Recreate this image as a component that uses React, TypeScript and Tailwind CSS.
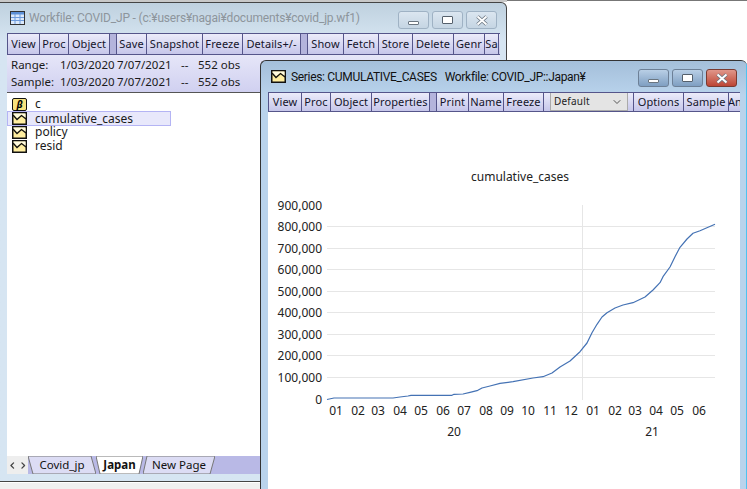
import React from 'react';
import { ChevronDown, ChevronLeft, ChevronRight } from 'lucide-react';

const FONT = "font-['Noto_Sans','Open_Sans',sans-serif]";

type Btn = { label: string; width: string; sep?: boolean };

const WORKFILE_BUTTONS: Btn[] = [
  { label: 'View', width: 'w-[32px]' },
  { label: 'Proc', width: 'w-[29px]' },
  { label: 'Object', width: 'w-[41px]' },
  { label: '', width: 'w-[7px]', sep: true },
  { label: 'Save', width: 'w-[30px]' },
  { label: 'Snapshot', width: 'w-[56px]' },
  { label: 'Freeze', width: 'w-[40px]' },
  { label: 'Details+/-', width: 'w-[58px]' },
  { label: '', width: 'w-[7px]', sep: true },
  { label: 'Show', width: 'w-[36px]' },
  { label: 'Fetch', width: 'w-[35px]' },
  { label: 'Store', width: 'w-[34px]' },
  { label: 'Delete', width: 'w-[41px]' },
  { label: 'Genr', width: 'w-[31px]' },
  { label: 'Sa', width: 'w-[14px]' },
];

const SERIES_LEFT: Btn[] = [
  { label: 'View', width: 'w-[33px]' },
  { label: 'Proc', width: 'w-[29px]' },
  { label: 'Object', width: 'w-[41px]' },
  { label: 'Properties', width: 'w-[58px]' },
  { label: '', width: 'w-[7px]', sep: true },
  { label: 'Print', width: 'w-[32px]' },
  { label: 'Name', width: 'w-[35px]' },
  { label: 'Freeze', width: 'w-[40px]' },
];

const SERIES_RIGHT: Btn[] = [
  { label: 'Options', width: 'w-[50px]' },
  { label: 'Sample', width: 'w-[45px]' },
  { label: 'An', width: 'w-[13px]' },
];

const OBJECTS = [
  { name: 'c', kind: 'coef' },
  { name: 'cumulative_cases', kind: 'series', selected: true },
  { name: 'policy', kind: 'series' },
  { name: 'resid', kind: 'series' },
];

const GRID = [226, 248, 269, 291, 312, 334, 355, 377];
const Y_LABELS = [
  ['900,000', 205],
  ['800,000', 226],
  ['700,000', 248],
  ['600,000', 269],
  ['500,000', 291],
  ['400,000', 312],
  ['300,000', 334],
  ['200,000', 355],
  ['100,000', 377],
  ['0', 399],
] as const;
const X_LABELS = [
  ['01', 336], ['02', 358], ['03', 378], ['04', 400], ['05', 421], ['06', 443],
  ['07', 464], ['08', 486], ['09', 507], ['10', 528], ['11', 550], ['12', 571],
  ['01', 593], ['02', 615], ['03', 635], ['04', 656], ['05', 677], ['06', 699],
] as const;
const LINE =
  '327,399.5 334,398 393,398 400,397 408,396 411,395.3 452,395.3 454,394.3 463,394 470,392.3 477,390.7 482,388 490,386 500,383.3 513,381.7 533,378 543,376.7 552,373 560,367 570,361 580,351.7 587,343 592,332.7 597,324.3 602,317 607,312.7 615,308 623,305 633,302.7 645,297 653,290 660,282.7 663,276.7 670,267 675,256.7 680,247.3 687,239 693,233.3 700,230.7 715,224.3';

const SeriesIcon = () => (
  <svg width="15" height="13" viewBox="0 0 15 13" className="shrink-0">
    <rect x="0.75" y="0.75" width="13.5" height="11.5" fill="#ffeea0" stroke="#111" strokeWidth="1.5" />
    <path d="M1.5 1.5 H13.5 V5.5 L9.5 2.5 L5 6 L1.5 2.5 Z" fill="#fffbe0" />
    <path d="M1 3 L5 7.5 L9.5 3.5 L14 7" fill="none" stroke="#111" strokeWidth="1.3" />
  </svg>
);

const CoefIcon = () => (
  <div className="flex h-[13px] w-[15px] shrink-0 items-center justify-center rounded-[2px] border border-[#111] bg-[#f7e27e] text-[10px] leading-none font-bold italic text-black">
    β
  </div>
);

const TableIcon = () => (
  <svg width="15" height="14" viewBox="0 0 15 14" className="shrink-0">
    <rect x="0.5" y="0.5" width="14" height="13" fill="#dbe9fb" stroke="#333" />
    <rect x="1" y="1" width="13" height="2.5" fill="#5b8fd6" />
    <path d="M5 3 V13 M10 3 V13 M1 6.5 H14 M1 9.5 H14" stroke="#6d9bdc" />
  </svg>
);

const CaptionButton = ({ kind, active }: { kind: 'min' | 'max' | 'close'; active: boolean }) => {
  let look = 'border-[#9fb2c4] bg-gradient-to-b from-[#dbe6f0] to-[#c5d5e3]';
  if (active) look = 'border-[#6d8097] bg-gradient-to-b from-[#b9cfe6] to-[#7f9fc2]';
  if (active && kind === 'close') look = 'border-[#7a3a30] bg-gradient-to-b from-[#e0968a] to-[#bc4434]';
  return (
    <div className={`flex h-[18px] w-[31px] items-center justify-center rounded-[3px] border ${look}`}>
      {kind === 'min' && <div className="mt-[5px] h-[4px] w-[11px] rounded-[1px] border border-[#6a7580] bg-white" />}
      {kind === 'max' && <div className="h-[8px] w-[11px] rounded-[1px] border-[1.5px] border-[#55606c] bg-white" />}
      {kind === 'close' && (
        <svg width="14" height="11" viewBox="0 0 14 11">
          <path d="M2.5 1.5 L11.5 9.5 M11.5 1.5 L2.5 9.5" stroke="#6a7580" strokeWidth="3.6" />
          <path d="M2.5 1.5 L11.5 9.5 M11.5 1.5 L2.5 9.5" stroke="#fff" strokeWidth="2" />
        </svg>
      )}
    </div>
  );
};

const CaptionButtons = ({ active }: { active: boolean }) => (
  <div className="flex items-center gap-[3px]">
    <CaptionButton kind="min" active={active} />
    <CaptionButton kind="max" active={active} />
    <CaptionButton kind="close" active={active} />
  </div>
);

const ToolButtons = ({ items }: { items: Btn[] }) => (
  <>
    {items.map((b, i) =>
      b.sep ? (
        <div key={i} className={`${b.width} h-full shrink-0 border-r border-[#55558a] bg-[#b4b4dc]`} />
      ) : (
        <div
          key={i}
          className={`${b.width} flex h-full shrink-0 items-center justify-center overflow-hidden border-r border-[#55558a] text-[11px] tracking-[0.1px] whitespace-nowrap text-[#14142a]`}
        >
          {b.label}
        </div>
      ),
    )}
  </>
);

const Tab = ({ label, variant }: { label: string; variant: 'left' | 'active' | 'right' }) => {
  const shape = {
    left: { w: 'w-[68px]', pts: '0,0 63,0 68,18 5,18', fill: '#dcdcf4', text: 'font-normal' },
    active: { w: 'w-[47px]', pts: '0,0 47,0 43,18 4,18', fill: '#ffffff', text: 'font-bold' },
    right: { w: 'w-[72px]', pts: '4,0 72,0 67,18 0,18', fill: '#dcdcf4', text: 'font-normal' },
  }[variant];
  return (
    <div className={`relative h-full shrink-0 ${shape.w}`}>
      <svg width="100%" height="18" className="absolute inset-0">
        <polygon points={shape.pts} fill={shape.fill} stroke="#777" strokeWidth="1" />
      </svg>
      <div className={`absolute inset-0 flex items-center justify-center text-[11.5px] text-[#111] ${shape.text}`}>{label}</div>
    </div>
  );
};

const InfoRow = ({ name }: { name: string }) => (
  <div className="flex h-[17px] items-center text-[11.5px] text-[#1a1a1a]">
    <span className="w-[49px]">{name}</span>
    <span className="w-[57px]">1/03/2020</span>
    <span className="w-[64px]">7/07/2021</span>
    <span className="w-[17px]">--</span>
    <span>552 obs</span>
  </div>
);

const Chart = () => (
  <svg width="472" height="377" className="block shrink-0" fontFamily="'Noto Sans', sans-serif" fontSize="12" fill="#222">
    <g transform="translate(-268 -112)">
      <text x="520" y="176" dy="4.5" textAnchor="middle">cumulative_cases</text>
      {GRID.map((y) => (
        <line key={y} x1="327" x2="715" y1={y + 0.5} y2={y + 0.5} stroke="#e6e6e6" />
      ))}
      <line x1="582.5" x2="582.5" y1="205" y2="400" stroke="#e6e6e6" />
      <polyline points={LINE} fill="none" stroke="#4472b4" strokeWidth="1.2" strokeLinejoin="round" />
      {Y_LABELS.map(([t, y]) => (
        <text key={t} x="322" y={y} dy="4.5" textAnchor="end">{t}</text>
      ))}
      {X_LABELS.map(([t, x], i) => (
        <text key={i} x={x} y="410" dy="4.5" textAnchor="middle">{t}</text>
      ))}
      <text x="454" y="431" dy="4.5" textAnchor="middle">20</text>
      <text x="652" y="431" dy="4.5" textAnchor="middle">21</text>
    </g>
  </svg>
);

const WorkfileWindow = () => (
  <div className="absolute top-[2px] left-0 flex h-[480px] w-[507px] flex-col overflow-hidden rounded-tr-[6px] border-t border-r border-b border-[#444] bg-gradient-to-b from-[#bfd1df] from-0% to-[#d6e5f2] to-[8%] pr-[6px] pb-[7px] pl-[7px]">
    <div className="flex h-[30px] shrink-0 items-center justify-between pr-[3px] pl-[3px]">
      <div className="flex items-center gap-[4px] font-['Roboto',sans-serif] text-[12px] tracking-[-0.18px] whitespace-nowrap text-[#8d959c]">
        <TableIcon />
        <span>Workfile: COVID_JP - (c:¥users¥nagai¥documents¥covid_jp.wf1)</span>
      </div>
      <div className="mt-[4px]">
        <CaptionButtons active={false} />
      </div>
    </div>
    <div className="flex h-[22px] shrink-0 overflow-hidden border-y border-l border-[#55558a] bg-gradient-to-b from-[#ececfa] to-[#c6c6ea]">
      <ToolButtons items={WORKFILE_BUTTONS} />
    </div>
    <div className="flex h-[38px] shrink-0 flex-col justify-center border-b border-[#555] bg-gradient-to-b from-[#e6e6f8] to-[#d0d0f0] pl-[4px]">
      <InfoRow name="Range:" />
      <InfoRow name="Sample:" />
    </div>
    <div className="flex-1 bg-white pt-[4px]">
      {OBJECTS.map((o) => (
        <div
          key={o.name}
          className={`flex w-[164px] items-center gap-[8px] border pl-[4px] text-[12px] leading-[12px] text-[#1a1a1a] ${
            o.selected ? 'mb-[-1px] h-[15px] border-[#b4b4f4] bg-[#e8e8fb]' : 'h-[14px] border-transparent'
          }`}
        >
          {o.kind === 'coef' ? <CoefIcon /> : <SeriesIcon />}
          <span>{o.name}</span>
        </div>
      ))}
    </div>
    <div className="flex h-[18px] shrink-0 bg-[#b9b9e6]">
      <div className="flex w-[21px] shrink-0 items-center justify-center bg-[#eeeeee] text-[#444]">
        <ChevronLeft size={11} strokeWidth={3} />
        <ChevronRight size={11} strokeWidth={3} />
      </div>
      <Tab label="Covid_jp" variant="left" />
      <Tab label="Japan" variant="active" />
      <Tab label="New Page" variant="right" />
    </div>
  </div>
);

const SeriesWindow = () => (
  <div className="absolute top-[60px] left-[260px] flex h-[429px] w-[487px] flex-col overflow-hidden rounded-t-[6px] border-t border-l border-[#333] bg-gradient-to-b from-[#a4bfda] from-0% to-[#b9d3ec] to-[8%] pr-[7px] pl-[7px]">
    <div className="flex h-[31px] shrink-0 items-center justify-between pr-[3px] pl-[3px]">
      <div className="flex items-center gap-[5px] font-['Roboto',sans-serif] text-[12px] tracking-[-0.32px] whitespace-pre text-[#111]">
        <SeriesIcon />
        <span>Series: CUMULATIVE_CASES   Workfile: COVID_JP::Japan¥</span>
      </div>
      <div className="mt-[3px]">
        <CaptionButtons active />
      </div>
    </div>
    <div className="flex h-[20px] shrink-0 overflow-hidden border-y border-l border-[#55558a] bg-gradient-to-b from-[#ececfa] to-[#c6c6ea]">
      <ToolButtons items={SERIES_LEFT} />
      <div className="mt-[-1px] ml-[6px] flex h-[19px] w-[78px] shrink-0 items-center justify-between self-start border border-[#aaaaaa] bg-[#e4e4e4] pr-[4px] pl-[3px] text-[10px] tracking-[0.2px] text-[#222]">
        Default
        <ChevronDown size={12} className="text-[#555]" />
      </div>
      <div className="ml-[5px] h-full w-[1px] shrink-0 bg-[#55558a]" />
      <ToolButtons items={SERIES_RIGHT} />
    </div>
    <div className="flex-1 overflow-hidden bg-white">
      <Chart />
    </div>
    <div className="absolute top-0 right-0 bottom-0 w-[1px] bg-[#4fc3f0]" />
  </div>
);

export default function App() {
  return (
    <div className={`relative h-[489px] w-[747px] overflow-hidden bg-white ${FONT}`}>
      <div className="absolute top-0 left-[507px] h-[1px] w-[240px] bg-[#777]" />
      <div className="absolute top-0 left-0 h-[2px] w-[507px] bg-[#c8c8c8]" />
      <WorkfileWindow />
      <div className="absolute top-[483px] left-0 h-[6px] w-[260px] bg-[#f0f0f0]" />
      <SeriesWindow />
    </div>
  );
}
